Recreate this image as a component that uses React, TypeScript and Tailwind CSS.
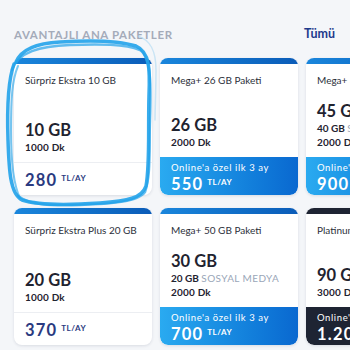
import React from "react";

type Pkg = {
  title: string;
  gb: string;
  extra?: string;
  dk: string;
  price: string;
  online?: boolean;
  dark?: boolean;
};

const rowOne: Pkg[] = [
  { title: "Sürpriz Ekstra 10 GB", gb: "10 GB", dk: "1000 Dk", price: "280" },
  { title: "Mega+ 26 GB Paketi", gb: "26 GB", dk: "2000 Dk", price: "550", online: true },
  { title: "Mega+ 86 GB Paketi", gb: "45 GB", extra: "40 GB", dk: "2000 Dk", price: "900", online: true },
];

const rowTwo: Pkg[] = [
  { title: "Sürpriz Ekstra Plus 20 GB", gb: "20 GB", dk: "1000 Dk", price: "370" },
  { title: "Mega+ 50 GB Paketi", gb: "30 GB", extra: "20 GB", dk: "2000 Dk", price: "700", online: true },
  { title: "Platinum Paket", gb: "90 GB", dk: "3000 Dk", price: "1.200", online: true, dark: true },
];

function PackageCard({ p }: { p: Pkg }) {
  return (
    <div className="w-[138px] shrink-0 h-[137px] rounded-[8px] overflow-hidden bg-white shadow-[0_1px_3px_rgba(30,40,70,0.12)] flex flex-col">
      <div
        className={
          p.dark
            ? "h-[6px] bg-[#1e2433]"
            : "h-[6px] bg-gradient-to-r from-[#1a86dc] to-[#0b5cb8]"
        }
      />
      <div className="px-[11px] pt-[9px] flex-1 flex flex-col">
        <div className="text-[10px] text-[#2b2f3a] leading-[14px] whitespace-nowrap">{p.title}</div>
        <div className="flex-1" />
        <div className="text-[16.5px] font-bold text-[#1f2330] leading-[19px]">{p.gb}</div>
        {p.extra && (
          <div className="text-[10px] font-bold text-[#1f2330] leading-[14px] whitespace-nowrap">
            {p.extra} <span className="font-normal text-[#9aa6b8] tracking-[0.4px]">SOSYAL MEDYA</span>
          </div>
        )}
        <div className="text-[10px] font-bold text-[#1f2330] leading-[14px] mb-[8px] tracking-[0.2px]">{p.dk}</div>
      </div>
      {p.online ? (
        <div
          className={
            p.dark
              ? "h-[38px] bg-[#1e2433] rounded-b-[8px] px-[11px] pt-[4px] text-white"
              : "h-[38px] bg-gradient-to-r from-[#2aaaf0] to-[#0a68d0] rounded-b-[8px] px-[11px] pt-[4px] text-white"
          }
        >
          <div className="text-[9.5px] leading-[13px] tracking-[0.6px] whitespace-nowrap">Online'a özel ilk 3 ay</div>
          <div className="flex items-start gap-[4px] leading-[20px] whitespace-nowrap">
            <span className="text-[16.5px] font-bold tracking-[1.2px]">{p.price}</span>
            <span className="text-[8px] font-bold pt-[2px] leading-[12px] tracking-[0.5px]">TL/AY</span>
          </div>
        </div>
      ) : (
        <div className="h-[33px] border-t border-[#eceef2] px-[11px] pt-[7px] flex items-start gap-[4px] whitespace-nowrap">
          <span className="text-[16.5px] font-bold text-[#2a3a80] leading-[20px] tracking-[1.2px]">{p.price}</span>
          <span className="text-[8px] font-bold text-[#2a3a80] leading-[12px] pt-[2px] tracking-[0.5px]">TL/AY</span>
        </div>
      )}
    </div>
  );
}

export default function App() {
  return (
    <div
      className="relative w-[350px] h-[350px] overflow-hidden bg-[#f4f6f9]"
      style={{ fontFamily: 'Lato, "Noto Sans", sans-serif' }}
    >
      <div className="flex items-center justify-between pl-[14px] pr-[15px] pt-[25px] h-[44px]">
        <div className="text-[11.5px] font-bold tracking-[0.6px] text-[#a4abb9]">AVANTAJLI ANA PAKETLER</div>
        <div className="text-[12.5px] font-bold text-[#1d3a8c]">Tümü</div>
      </div>
      <div className="pl-[14px] pt-[14px] flex flex-col gap-[13px]">
        <div className="flex gap-[8px]">
          {rowOne.map((p) => (
            <PackageCard key={p.title} p={p} />
          ))}
        </div>
        <div className="flex gap-[8px]">
          {rowTwo.map((p) => (
            <PackageCard key={p.title} p={p} />
          ))}
        </div>
      </div>

      {/* hand-drawn highlight */}
      <svg className="absolute left-0 top-0 pointer-events-none" width="350" height="350" viewBox="0 0 350 350">
        <path
          d="M16 62 C22 48 38 43 60 42 C90 40 120 41 136 46 C150 52 150 70 149 95 C148 130 150 165 146 186 C142 198 128 201 100 203 C70 205 40 206 22 200 C10 194 9 170 8 140 C7 110 8 80 14 64"
          fill="none"
          stroke="#22a3ea"
          strokeWidth="3.5"
          strokeLinecap="round"
          opacity="0.9"
        />
        <path
          d="M12 70 C18 52 40 46 70 45 C100 44 125 44 140 50 C152 58 151 90 150 120 C149 150 151 175 145 192 C138 202 110 204 80 205 C50 206 30 205 18 196"
          fill="none"
          stroke="#22a3ea"
          strokeWidth="2.5"
          strokeLinecap="round"
          opacity="0.7"
        />
        <path
          d="M20 198 C14 186 11 160 11 130 C11 100 12 80 18 66"
          fill="none"
          stroke="#22a3ea"
          strokeWidth="2"
          strokeLinecap="round"
          opacity="0.6"
        />
        <path
          d="M138 36 C150 40 156 50 156 70 C156 90 155 110 155 120"
          fill="none"
          stroke="#9fd3f2"
          strokeWidth="1.5"
          strokeLinecap="round"
          opacity="0.5"
        />
      </svg>
    </div>
  );
}
